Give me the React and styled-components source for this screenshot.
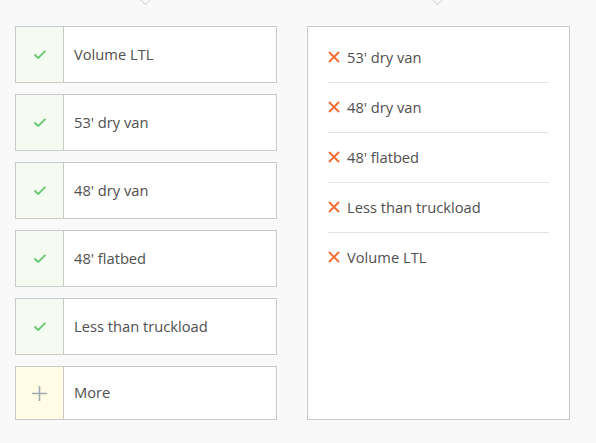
import React from "react";
import styled, { createGlobalStyle } from "styled-components";

const Global = createGlobalStyle`
  html, body { margin: 0; padding: 0; background: #f9f9f9; }
  body { font-family: "Open Sans", "Lato", sans-serif; color: #555; }
`;

const Page = styled.div`
  position: relative;
  display: flex;
  align-items: flex-start;
  gap: 30px;
  padding: 26px 0 0 15px;
  height: 443px;
  box-sizing: border-box;
  overflow: hidden;
`;

const Pointer = styled.div`
  position: absolute;
  top: -8px;
  left: ${(p) => p.$x}px;
  width: 10px;
  height: 10px;
  border-right: 1px solid #d4d9dc;
  border-bottom: 1px solid #d4d9dc;
  background: #f9f9f9;
  transform: rotate(45deg);
`;

const Column = styled.div`
  display: flex;
  flex-direction: column;
  gap: 11px;
  width: 262px;
`;

const Card = styled.div`
  display: flex;
  height: ${(p) => p.$h}px;
  box-sizing: border-box;
  border: 1px solid #c9c9c9;
  background: #fff;
`;

const IconCell = styled.div`
  width: 47px;
  flex: none;
  display: flex;
  align-items: center;
  justify-content: center;
  border-right: 1px solid #c9c9c9;
  background: ${(p) => (p.$more ? "#fffde6" : "#f6fbf1")};
`;

const Label = styled.div`
  display: flex;
  align-items: center;
  padding: 0 0 2px 10px;
  font-size: 14.7px;
  color: #505050;
`;

const Panel = styled.div`
  width: 263px;
  height: 394px;
  box-sizing: border-box;
  border: 1px solid #c9c9c9;
  background: #fff;
  padding: 6px 20px 0 20px;
`;

const Item = styled.div`
  display: flex;
  align-items: center;
  gap: 7px;
  height: 49px;
  padding-bottom: 2px;
  box-sizing: border-box;
  font-size: 14.7px;
  color: #505050;
  & + & { border-top: 1px solid #e2e2e2; height: 50px; }
`;

const Check = () => (
  <svg width="14" height="11" viewBox="0 0 14 11">
    <path d="M1.5 5.5 L5.2 9 L12.5 1.8" fill="none" stroke="#62c972" strokeWidth="1.8" />
  </svg>
);

const Plus = () => (
  <svg width="15" height="15" viewBox="0 0 15 15">
    <path d="M7.5 0 V15 M0 7.5 H15" stroke="#9fabb3" strokeWidth="1.6" />
  </svg>
);

const Cross = () => (
  <svg width="12" height="12" viewBox="0 0 12 12">
    <path d="M1 1 L11 11 M11 1 L1 11" stroke="#f26a2e" strokeWidth="1.8" />
  </svg>
);

const left = ["Volume LTL", "53' dry van", "48' dry van", "48' flatbed", "Less than truckload"];
const right = ["53' dry van", "48' dry van", "48' flatbed", "Less than truckload", "Volume LTL"];

export default function App() {
  return (
    <>
      <Global />
      <Page>
        <Pointer $x={140} />
        <Pointer $x={432} />
        <Column>
          {left.map((t) => (
            <Card key={t} $h={57}>
              <IconCell><Check /></IconCell>
              <Label>{t}</Label>
            </Card>
          ))}
          <Card $h={54}>
            <IconCell $more><Plus /></IconCell>
            <Label>More</Label>
          </Card>
        </Column>
        <Panel>
          {right.map((t) => (
            <Item key={t}>
              <Cross />
              {t}
            </Item>
          ))}
        </Panel>
      </Page>
    </>
  );
}
